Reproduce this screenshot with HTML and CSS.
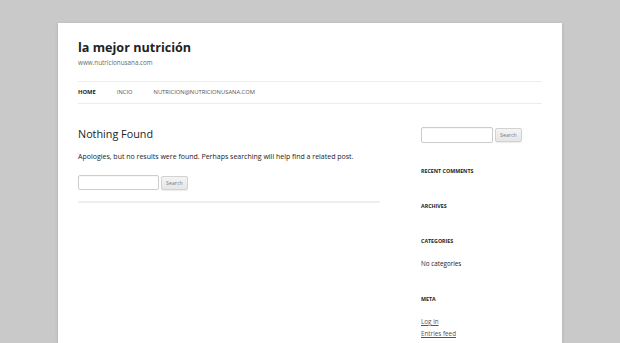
FILE: index.html
```html
<!DOCTYPE html>
<html lang="es">
<head>
    <meta charset="UTF-8">
    <meta name="viewport" content="width=device-width, initial-scale=1.0">
    <title>la mejor nutrición</title>
    <link rel="stylesheet" href="styles.css">
</head>
<body>
    <div class="site">
        <header class="site-header">
            <h1 class="site-title"><a href="#">la mejor nutrición</a></h1>
            <h2 class="site-description">www.nutricionusana.com</h2>

            <nav class="main-navigation">
                <ul class="nav-menu">
                    <li class="current"><a href="#">Home</a></li>
                    <li><a href="#">Incio</a></li>
                    <li><a href="#">nutricion@nutricionusana.com</a></li>
                </ul>
            </nav>
        </header>

        <div class="main">
            <section class="site-content">
                <article class="no-results">
                    <h1 class="entry-title">Nothing Found</h1>
                    <p>Apologies, but no results were found. Perhaps searching will help find a related post.</p>
                    <form class="search-form">
                        <input type="text" class="search-input">
                        <button type="button" class="search-btn">Search</button>
                    </form>
                </article>
            </section>

            <aside class="widget-area">
                <div class="widget widget-search">
                    <form class="search-form">
                        <input type="text" class="search-input small">
                        <button type="button" class="search-btn">Search</button>
                    </form>
                </div>
                <div class="widget">
                    <h3>Recent Comments</h3>
                </div>
                <div class="widget">
                    <h3>Archives</h3>
                </div>
                <div class="widget">
                    <h3>Categories</h3>
                    <ul>
                        <li>No categories</li>
                    </ul>
                </div>
                <div class="widget">
                    <h3>Meta</h3>
                    <ul>
                        <li><a href="#">Log in</a></li>
                        <li><a href="#">Entries feed</a></li>
                    </ul>
                </div>
            </aside>
        </div>
    </div>
</body>
</html>
```

FILE: styles.css
```css
html,
body {
    height: 100%;
    overflow: hidden;
}

body {
    margin: 0;
    background: #c9c9c9;
    font-family: 'Open Sans', sans-serif;
    color: #2b2b2b;
}

.site {
    width: 464px;
    height: 320px;
    margin: 23px auto 0;
    padding: 0 20px;
    background: #fff;
    box-shadow: 0 1px 3px rgba(100, 100, 100, 0.3);
    overflow: hidden;
}

/* Cabeçalho */
.site-header {
    padding-top: 15px;
}

.site-title {
    margin: 0;
    font-size: 12.6px;
    line-height: 20px;
    font-weight: bold;
}

.site-title a {
    color: #222;
    text-decoration: none;
}

.site-description {
    margin: 0;
    font-size: 6.3px;
    line-height: 10px;
    font-weight: normal;
    color: #6a6a6a;
}

.main-navigation {
    margin-top: 13px;
}

.nav-menu {
    display: flex;
    margin: 0;
    padding: 0;
    list-style: none;
    border-top: 1px solid #ededed;
    border-bottom: 1px solid #ededed;
}

.nav-menu li {
    margin-right: 21px;
    font-size: 5.8px;
    line-height: 21px;
    text-transform: uppercase;
}

.nav-menu a {
    color: #555;
    text-decoration: none;
}

.nav-menu .current a {
    color: #222;
    font-weight: bold;
}

/* Conteúdo */
.main {
    display: grid;
    grid-template-columns: 302px 1fr;
    gap: 41px;
    padding-top: 23px;
}

.no-results {
    padding-bottom: 11px;
    border-bottom: 2px solid #eeeeee;
}

.entry-title {
    margin: 0 0 10px;
    font-size: 10.8px;
    line-height: 14px;
    font-weight: normal;
    color: #222;
}

.no-results p {
    margin: 0 0 12px;
    font-size: 7px;
    line-height: 12px;
    color: #222;
}

.search-form {
    display: flex;
    align-items: center;
    gap: 2px;
    margin: 0;
}

.search-input {
    width: 81px;
    height: 15px;
    box-sizing: border-box;
    border: 1px solid #ccc;
    border-radius: 2px;
    box-shadow: inset 0 1px 1px rgba(0, 0, 0, 0.03);
    padding: 0 3px;
}

.search-input.small {
    width: 72px;
    height: 16px;
}

.search-btn {
    height: 14px;
    padding: 0 4px;
    border: 1px solid #d2d2d2;
    border-radius: 2px;
    background: linear-gradient(to bottom, #f4f4f4, #e6e6e6);
    box-shadow: 0 1px 1px rgba(64, 64, 64, 0.1);
    font-family: 'Open Sans', sans-serif;
    font-size: 5.3px;
    color: #7c7c7c;
}

/* Barra lateral */
.widget {
    margin-bottom: 23px;
}

.widget-search {
    margin-bottom: 22px;
}

.widget h3 {
    margin: 0;
    font-size: 5.3px;
    line-height: 12px;
    font-weight: bold;
    text-transform: uppercase;
    color: #222;
}

.widget ul {
    margin: 11px 0 0;
    padding: 0;
    list-style: none;
}

.widget li {
    font-size: 6.3px;
    line-height: 12px;
    color: #222;
}

.widget a {
    color: #555;
}
```
